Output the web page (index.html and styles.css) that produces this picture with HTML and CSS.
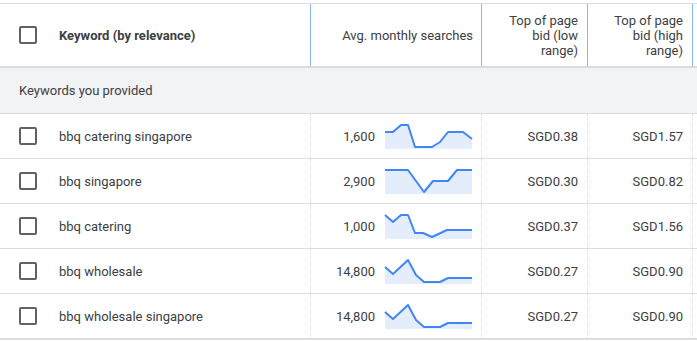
FILE: index.html
```html
<!DOCTYPE html>
<html lang="en">
<head>
    <meta charset="utf-8" />
    <meta name="viewport" content="width=device-width, initial-scale=1" />
    <title>Keyword ideas</title>
    <link rel="stylesheet" href="styles.css">
</head>
<body>
    <div class="kw-table">
        <div class="row head">
            <div class="cell kw">
                <span class="checkbox"></span>
                <span>Keyword (by relevance)</span>
            </div>
            <div class="cell num">Avg. monthly searches</div>
            <div class="cell bid"><span class="label">Top of page bid (low range)</span></div>
            <div class="cell bid"><span class="label">Top of page bid (high range)</span></div>
            <div class="cell extra"></div>
        </div>

        <div class="group">Keywords you provided</div>

        <div class="row">
            <div class="cell kw"><span class="checkbox"></span><span>bbq catering singapore</span></div>
            <div class="cell num">
                <span>1,600</span>
                <svg class="spark" width="88" height="26" viewBox="0 0 88 26">
                    <polygon class="area" points="0,9 8,9 16,2 23,2 30,24 47,24 55,19 63,9 78,9 87,16 87,26 0,26" />
                    <polyline class="line" points="0,9 8,9 16,2 23,2 30,24 47,24 55,19 63,9 78,9 87,16" />
                </svg>
            </div>
            <div class="cell bid">SGD0.38</div>
            <div class="cell bid">SGD1.57</div>
            <div class="cell extra"></div>
        </div>

        <div class="row">
            <div class="cell kw"><span class="checkbox"></span><span>bbq singapore</span></div>
            <div class="cell num">
                <span>2,900</span>
                <svg class="spark" width="88" height="26" viewBox="0 0 88 26">
                    <polygon class="area" points="0,2 23,2 39,24 48,13 63,13 72,2 87,2 87,26 0,26" />
                    <polyline class="line" points="0,2 23,2 39,24 48,13 63,13 72,2 87,2" />
                </svg>
            </div>
            <div class="cell bid">SGD0.30</div>
            <div class="cell bid">SGD0.82</div>
            <div class="cell extra"></div>
        </div>

        <div class="row">
            <div class="cell kw"><span class="checkbox"></span><span>bbq catering</span></div>
            <div class="cell num">
                <span>1,000</span>
                <svg class="spark" width="88" height="26" viewBox="0 0 88 26">
                    <polygon class="area" points="0,2 8,9 16,2 23,2 30,20 38,20 47,24 62,17 87,17 87,26 0,26" />
                    <polyline class="line" points="0,2 8,9 16,2 23,2 30,20 38,20 47,24 62,17 87,17" />
                </svg>
            </div>
            <div class="cell bid">SGD0.37</div>
            <div class="cell bid">SGD1.56</div>
            <div class="cell extra"></div>
        </div>

        <div class="row">
            <div class="cell kw"><span class="checkbox"></span><span>bbq wholesale</span></div>
            <div class="cell num">
                <span>14,800</span>
                <svg class="spark" width="88" height="26" viewBox="0 0 88 26">
                    <polygon class="area" points="0,9 8,16 23,2 31,17 39,24 55,24 63,20 87,20 87,26 0,26" />
                    <polyline class="line" points="0,9 8,16 23,2 31,17 39,24 55,24 63,20 87,20" />
                </svg>
            </div>
            <div class="cell bid">SGD0.27</div>
            <div class="cell bid">SGD0.90</div>
            <div class="cell extra"></div>
        </div>

        <div class="row last">
            <div class="cell kw"><span class="checkbox"></span><span>bbq wholesale singapore</span></div>
            <div class="cell num">
                <span>14,800</span>
                <svg class="spark" width="88" height="26" viewBox="0 0 88 26">
                    <polygon class="area" points="0,9 8,16 23,2 31,17 39,24 55,24 63,20 87,20 87,26 0,26" />
                    <polyline class="line" points="0,9 8,16 23,2 31,17 39,24 55,24 63,20 87,20" />
                </svg>
            </div>
            <div class="cell bid">SGD0.27</div>
            <div class="cell bid">SGD0.90</div>
            <div class="cell extra"></div>
        </div>
    </div>
</body>
</html>
```

FILE: styles.css
```css
* {
    margin: 0;
    padding: 0;
    box-sizing: border-box;
}

body {
    font-family: Roboto, 'Liberation Sans', Arial, sans-serif;
    font-size: 13px;
    color: #3c4043;
    background: white;
    overflow: hidden;
}

.kw-table {
    margin-top: 3px;
    border-top: 1px solid #dadce0;
    width: 100%;
}

.row {
    display: grid;
    grid-template-columns: 311px 171px 106px 105px 1fr;
    height: 45px;
    border-bottom: 1px solid #dadce0;
}

.row.last {
    height: 46px;
    border-bottom: 2px solid #dadce0;
}

.cell {
    display: flex;
    align-items: center;
    border-right: 1px dotted #dadce0;
}

.cell.extra {
    border-right: none;
}

.head {
    height: 64px;
    border-bottom: 2px solid #dadce0;
    line-height: 15px;
}

.head .cell {
    border-right: 1px solid #8ab4f8;
}

.head .cell.extra {
    border-right: none;
}

.head .kw {
    font-weight: 700;
}

.kw {
    padding-left: 19px;
    gap: 22px;
}

.num {
    justify-content: flex-end;
    padding-right: 8px;
    gap: 10px;
}

.bid {
    justify-content: flex-end;
    padding-right: 9px;
    text-align: right;
}

.bid .label {
    max-width: 74px;
}

.checkbox {
    width: 18px;
    height: 18px;
    border: 2px solid #5f6368;
    border-radius: 2px;
    flex-shrink: 0;
}

.group {
    height: 46px;
    padding-left: 19px;
    display: flex;
    align-items: center;
    background: #f1f3f4;
    border-bottom: 1px solid #dadce0;
}

.spark {
    display: block;
    overflow: visible;
}

.spark .area {
    fill: #e4edfc;
}

.spark .line {
    fill: none;
    stroke: #4285f4;
    stroke-width: 2;
    stroke-linejoin: round;
}
```
